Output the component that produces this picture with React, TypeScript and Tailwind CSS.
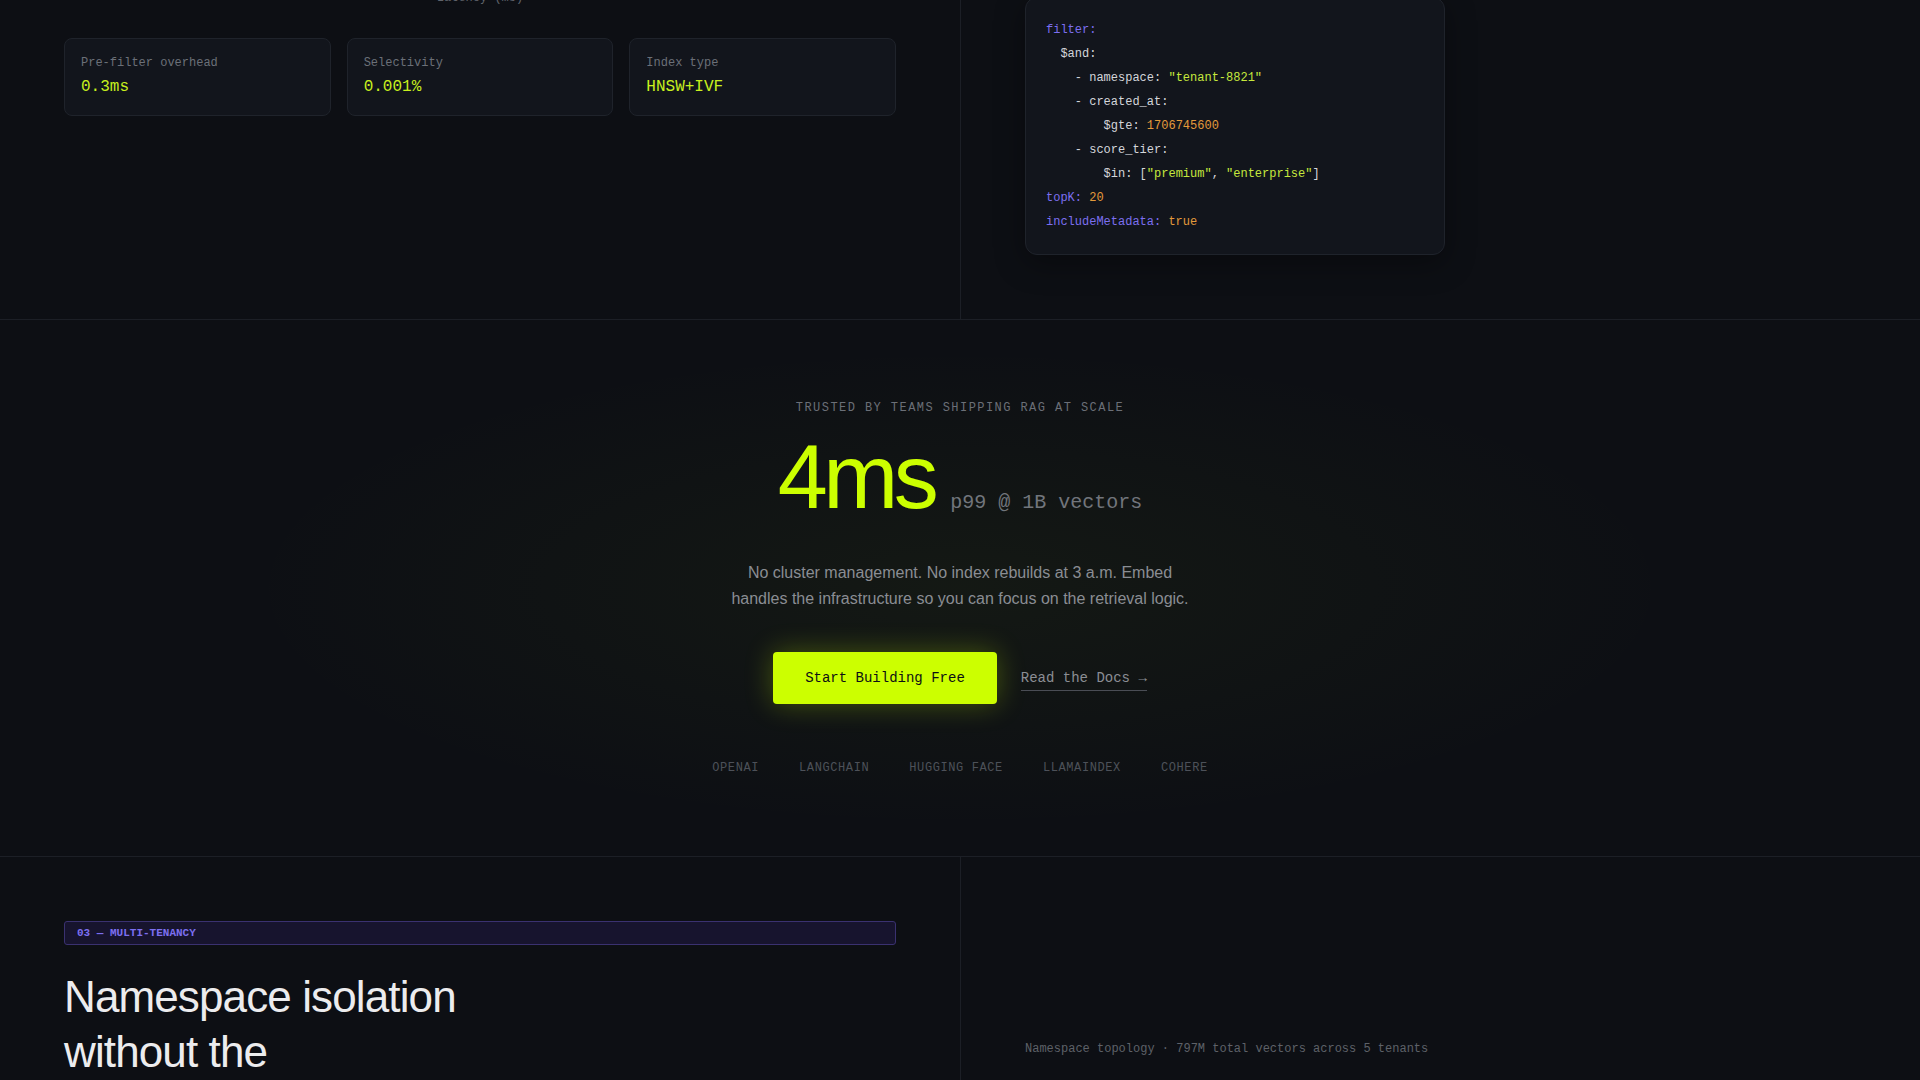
const mono = "font-['Liberation_Mono',monospace]";
const sans = "font-['Liberation_Sans',Arial,sans-serif]";

const stats = [
  { label: "Pre-filter overhead", value: "0.3ms" },
  { label: "Selectivity", value: "0.001%" },
  { label: "Index type", value: "HNSW+IVF" },
];

const partners = ["OPENAI", "LANGCHAIN", "HUGGING FACE", "LLAMAINDEX", "COHERE"];

function Key({ children }: { children: React.ReactNode }) {
  return <span className="text-[#7c6ff0]">{children}</span>;
}
function Str({ children }: { children: React.ReactNode }) {
  return <span className="text-[#c6e83c]">{children}</span>;
}
function Num({ children }: { children: React.ReactNode }) {
  return <span className="text-[#e39a3b]">{children}</span>;
}

function FilterCode() {
  return (
    <div className={`${mono} -mt-[3px] w-[420px] rounded-xl border border-[#1f232b] bg-[#12151c] p-5 text-xs leading-6 text-[#d4d6db] whitespace-pre shadow-[0_8px_30px_rgba(0,0,0,0.35)]`}>
      <div><Key>filter:</Key></div>
      <div>{"  "}$and:</div>
      <div>{"    "}- namespace: <Str>"tenant-8821"</Str></div>
      <div>{"    "}- created_at:</div>
      <div>{"        "}$gte: <Num>1706745600</Num></div>
      <div>{"    "}- score_tier:</div>
      <div>{"        "}$in: [<Str>"premium"</Str>, <Str>"enterprise"</Str>]</div>
      <div><Key>topK:</Key> <Num>20</Num></div>
      <div><Key>includeMetadata:</Key> <Num>true</Num></div>
    </div>
  );
}

export default function App() {
  return (
    <div className={`${sans} h-[1080px] overflow-hidden bg-[#0d0f14] text-[#d4d6db]`}>
      {/* filtered search section (scrolled partly out of view) */}
      <section className="grid grid-cols-2 border-b border-[#1c1f26]">
        <div className="px-16">
          <p className={`${mono} -mt-[10px] text-center text-xs leading-4 text-[#5f636b]`}>Latency (ms)</p>
          <div className="mt-[32px] grid grid-cols-3 gap-4">
            {stats.map((s) => (
              <div key={s.label} className="rounded-lg border border-[#1f232b] bg-[#12151c] p-4">
                <p className={`${mono} text-xs leading-4 text-[#6b7078]`}>{s.label}</p>
                <p className={`${mono} mt-1 text-base leading-6 text-[#c8f01e]`}>{s.value}</p>
              </div>
            ))}
          </div>
        </div>
        <div className="border-l border-[#1c1f26] px-16 pb-16">
          <FilterCode />
        </div>
      </section>

      {/* social proof */}
      <section className="flex flex-col items-center border-b border-[#1c1f26] bg-[radial-gradient(ellipse_50%_60%_at_50%_50%,rgba(150,200,20,0.05),transparent_75%)] py-20">
        <p className={`${mono} text-xs leading-4 tracking-[0.12em] text-[#6b6f77]`}>TRUSTED BY TEAMS SHIPPING RAG AT SCALE</p>
        <div className="mt-4 flex items-baseline gap-4">
          <span className="text-[90px] leading-none tracking-[-0.05em] text-[#ccff00]">4ms</span>
          <span className={`${mono} text-xl text-[#71757c]`}>p99 @ 1B vectors</span>
        </div>
        <p className="mt-[38px] max-w-[472px] text-center text-base leading-[26px] text-[#8a8d93]">
          No cluster management. No index rebuilds at 3 a.m. Embed handles the infrastructure so you can focus on the retrieval logic.
        </p>
        <div className="mt-10 flex items-center gap-6">
          <button className={`${mono} h-[52px] rounded-[4px] bg-[#ccff00] px-8 text-sm text-[#0d0f14] shadow-[0_0_28px_rgba(204,255,0,0.28)]`}>
            Start Building Free
          </button>
          <a href="#" className={`${mono} mt-[2px] border-b border-[#4a4d55] pb-[2px] text-sm leading-5 text-[#8b8e94]`}>
            Read the Docs →
          </a>
        </div>
        <div className="mt-14 flex items-center gap-10">
          {partners.map((p) => (
            <span key={p} className={`${mono} text-xs leading-4 tracking-[0.05em] text-[#4d5159]`}>{p}</span>
          ))}
        </div>
      </section>

      {/* multi-tenancy */}
      <section className="grid grid-cols-2">
        <div className="px-16 pt-16">
          <div className={`${mono} rounded-[3px] border border-[#3a3170] bg-[#17142e] px-3 py-[3px] text-[11px] leading-4 font-bold text-[#7c6ff0]`}>
            03 — MULTI-TENANCY
          </div>
          <h2 className="mt-6 max-w-[400px] text-[44px] leading-[1.25] tracking-[-0.02em] text-[#ececee]">
            Namespace isolation without the operational overhead
          </h2>
        </div>
        <div className="border-l border-[#1c1f26] px-16 pt-16">
          <div className="h-[120px]" aria-hidden="true" />
          <p className={`${mono} text-xs leading-4 text-[#5d6168]`}>Namespace topology · 797M total vectors across 5 tenants</p>
        </div>
      </section>
    </div>
  );
}
